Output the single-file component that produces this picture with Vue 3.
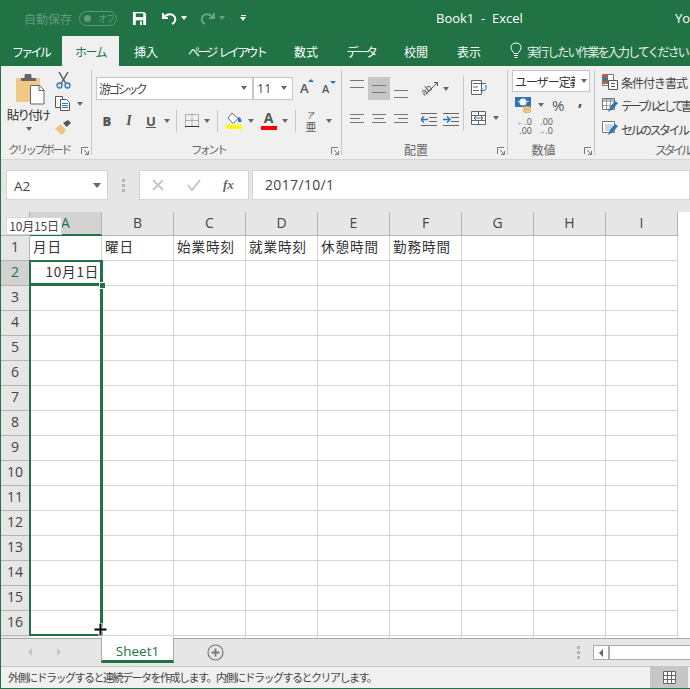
<script setup>
const cols = ['A', 'B', 'C', 'D', 'E', 'F', 'G', 'H', 'I']
const heads = ['月日', '曜日', '始業時刻', '就業時刻', '休憩時間', '勤務時間', '', '', '']
const rows = Array.from({ length: 14 }, (_, i) => i + 3)
</script>

<template>
  <div class="app">
    <header class="titlebar">
      <span class="autosave">自動保存</span>
      <span class="toggle"><i class="dot"></i><em>オフ</em></span>
      <svg class="save" width="16" height="16" viewBox="0 0 16 16"><path d="M1 1h12l2 2v12H1z" fill="#fff"/><path d="M4 2.500h8v4H4z" fill="#217346"/><path d="M4 10h8v5H4z" fill="#217346"/><path d="M8.500 11h2v4h-2z" fill="#fff"/></svg>
      <svg class="undo" width="17" height="14" viewBox="0 0 17 14"><path d="M2 2v5h5M2.500 6.500C5 3.500 8 3 10.500 3.500 13.500 4.500 15 7 14 10 13.500 11.500 12 12.500 11 13" fill="none" stroke="#fff" stroke-width="2"/></svg>
      <i class="caret white c1"></i>
      <svg class="redo" width="17" height="14" viewBox="0 0 17 14"><path d="M15 2v5h-5M14.500 6.500C12 3.500 9 3 6.500 3.500 3.500 4.500 2 7 3 10 3.500 11.500 5 12.500 6 13" fill="none" stroke="#6aa388" stroke-width="2"/></svg>
      <i class="caret dim c2"></i>
      <span class="qat"><i></i><i class="caret white"></i></span>
      <span class="doc">Book1&nbsp; -&nbsp; Excel</span>
      <span class="user">Yo</span>
    </header>

    <nav class="tabs">
      <span class="tab t-file">ファイル</span>
      <span class="tab t-home">ホーム</span>
      <span class="tab t-ins">挿入</span>
      <span class="tab t-page">ページ レイアウト</span>
      <span class="tab t-form">数式</span>
      <span class="tab t-data">データ</span>
      <span class="tab t-rev">校閲</span>
      <span class="tab t-view">表示</span>
      <svg class="bulb" width="12" height="17" viewBox="0 0 12 17"><path d="M4 11.500C3.500 9.500 1 8.500 1 5.500 1 2.700 3.200 1 6 1s5 1.700 5 4.500c0 3-2.500 4-3 6zM4 13.500h4M4.500 15.500h3" fill="none" stroke="#fff" stroke-width="1"/></svg>
      <span class="tell">実行したい作業を入力してください</span>
    </nav>

    <section class="ribbon">
      <div class="group g-clip">
        <div class="gbody clip-body">
          <div class="paste">
            <svg width="30" height="31" viewBox="0 0 30 31"><rect x="0" y="4" width="24" height="24" rx="1" fill="#f0c987"/><path d="M5 4h3.500V2a2.500 2 0 0 1 7 0v2H20v3H5z" fill="#666"/><path d="M14.500 11.500h9l4.500 4.500v14H14.500z" fill="#fff" stroke="#666"/><path d="M23 11.500V16.500h5" fill="none" stroke="#666"/></svg>
            <span class="paste-label">貼り付け</span>
            <i class="caret"></i>
          </div>
          <div class="clip-tools">
            <svg width="15" height="17" viewBox="0 0 15 17"><path d="M3 0l6.500 11M12 0L5.500 11" stroke="#555" stroke-width="1.400" fill="none"/><circle cx="3.500" cy="13.500" r="2.500" fill="none" stroke="#2f75b5" stroke-width="1.300"/><circle cx="11.500" cy="13.500" r="2.500" fill="none" stroke="#2f75b5" stroke-width="1.300"/></svg>
            <span class="copy-row">
              <svg width="17" height="15" viewBox="0 0 17 15"><path d="M.5.500h7v11h-7z" fill="#fff" stroke="#555"/><path d="M5.500 3.500h6l3 3v8h-9z" fill="#fff" stroke="#555"/><path d="M7 7.500h6M7 9.500h6M7 11.500h6" stroke="#2f75b5"/></svg>
              <i class="caret"></i>
            </span>
            <svg class="brush" width="17" height="15" viewBox="0 0 17 15"><path d="M0 9l6-5 5 6-4 5z" fill="#eec27f"/><path d="M6 4l2-1.500 3 4 .5 3.500z" fill="#fff"/><path d="M8 3l5-3 3 3-4.500 4z" fill="#555"/></svg>
          </div>
        </div>
        <div class="glabel lab-clip">クリップボード</div>
        <svg class="launch" width="8" height="8" viewBox="0 0 8 8"><path d="M.5 7V.5H7M3 3l4 4M4 7.500h3.500V4" fill="none" stroke="#777"/></svg>
      </div>

      <div class="group g-font">
        <div class="gbody stack">
          <div class="row font-row">
            <span class="combo fname">游ゴシック<i class="caret"></i></span>
            <span class="combo fsize">11<i class="caret"></i></span>
            <span class="grow"><b>A</b><i class="up"></i></span>
            <span class="shrink"><b>A</b><i class="down"></i></span>
          </div>
          <div class="row fmt-row">
            <span class="fb bold">B</span>
            <span class="fb ital">I</span>
            <span class="fb under">U</span>
            <i class="caret"></i>
            <i class="sep s1"></i>
            <svg class="bd" width="14" height="13" viewBox="0 0 14 13"><path d="M.5.500h13v12H.5zM7 .5v12M.5 6.500h13" fill="none" stroke="#777" stroke-dasharray="1 1"/><path d="M0 12.500h14" stroke="#333"/></svg>
            <i class="caret"></i>
            <i class="sep s2"></i>
            <svg class="fill" width="17" height="16" viewBox="0 0 17 16"><path d="M6 0l6 5.500-5 5-5-5.500z" fill="#fff" stroke="#666"/><path d="M12 4c2.500 .5 3.500 2 3.500 5h-3.500z" fill="#2f75b5"/><path d="M0 12h16v4H0z" fill="#ff0"/></svg>
            <i class="caret"></i>
            <span class="fcolor">A<i></i></span>
            <i class="caret"></i>
            <i class="sep s3"></i>
            <span class="phon"><small>ア</small><span>亜</span></span>
            <i class="caret"></i>
          </div>
        </div>
        <div class="glabel lab-font">フォント</div>
        <svg class="launch" width="8" height="8" viewBox="0 0 8 8"><path d="M.5 7V.5H7M3 3l4 4M4 7.500h3.500V4" fill="none" stroke="#777"/></svg>
      </div>

      <div class="group g-align">
        <div class="gbody align-body">
          <div class="stack align-main">
            <div class="row a-row">
              <span class="ab"><i class="ln top"></i></span>
              <span class="ab on"><i class="ln"></i></span>
              <span class="ab"><i class="ln bot"></i></span>
              <svg class="orient" width="18" height="17" viewBox="0 0 18 17"><text x="0" y="13" font-size="10" fill="#555" font-family="Liberation Sans" transform="rotate(-40 6 10)">ab</text><path d="M5 14L16 3M13 2.500h3.500V6" stroke="#555" fill="none"/></svg>
              <i class="caret"></i>
            </div>
            <div class="row a-row second">
              <span class="ab"><i class="tl"></i></span>
              <span class="ab"><i class="tl center"></i></span>
              <span class="ab"><i class="tl right"></i></span>
              <svg class="ind" width="16" height="13" viewBox="0 0 16 13"><path d="M0 .5h16M8 4.500h8M8 8.500h8M0 12.500h16" stroke="#666"/><path d="M0 6.500h7M3 3.500l-3 3 3 3" stroke="#2f75b5" stroke-width="1.500" fill="none"/></svg>
              <svg class="ind i2" width="16" height="13" viewBox="0 0 16 13"><path d="M0 .5h16M8 4.500h8M8 8.500h8M0 12.500h16" stroke="#666"/><path d="M0 6.500h7M4 3.500l3 3-3 3" stroke="#2f75b5" stroke-width="1.500" fill="none"/></svg>
            </div>
          </div>
          <i class="sep tall"></i>
          <div class="stack wrapcol">
            <svg width="17" height="15" viewBox="0 0 17 15"><path d="M.5.500h10v14H.5z" fill="#fff" stroke="#666"/><path d="M2 3.500h13M2 7h5M2 10.500h6" stroke="#666"/><path d="M15 5v3.500a2 2 0 0 1-2 2h-3M11.500 8.500l-2 2 2 2" stroke="#2f75b5" fill="none"/></svg>
            <span class="merge-row">
              <svg width="15" height="14" viewBox="0 0 15 14"><path d="M.5.500h14v13H.5zM.5 4.500h14M.5 9.500h14M7.500.5v4M7.500 9.500v4" fill="#fff" stroke="#666"/><path d="M3 7h9M5 5l-2 2 2 2M10 5l2 2-2 2" fill="none" stroke="#2f75b5"/></svg>
              <i class="caret"></i>
            </span>
          </div>
        </div>
        <div class="glabel lab-align">配置</div>
        <svg class="launch" width="8" height="8" viewBox="0 0 8 8"><path d="M.5 7V.5H7M3 3l4 4M4 7.500h3.500V4" fill="none" stroke="#777"/></svg>
      </div>

      <div class="group g-num">
        <div class="gbody num-body">
          <div class="numfmt"><span>ユーザー定義</span><i class="caret"></i></div>
          <div class="row n2">
            <svg width="17" height="16" viewBox="0 0 17 16"><path d="M0 0h16v10H0z" fill="#2f75b5"/><ellipse cx="8" cy="5" rx="3.500" ry="3.500" fill="#fff"/><path d="M3 4.500h1.500M12 4.500h1.500" stroke="#fff"/><ellipse cx="12" cy="11" rx="4" ry="1.800" fill="#f0c987" stroke="#c9963f" stroke-width=".5"/><ellipse cx="12" cy="14" rx="4" ry="1.800" fill="#f0c987" stroke="#c9963f" stroke-width=".5"/></svg>
            <i class="caret"></i>
            <span class="pct">%</span>
            <span class="comma">,</span>
          </div>
          <div class="row n3">
            <span class="dec"><span><b class="arr">←</b>.0</span><span>.00</span></span>
            <span class="dec d2"><span>.00</span><span><b class="arr">→</b>.0</span></span>
          </div>
        </div>
        <div class="glabel lab-num">数値</div>
        <svg class="launch" width="8" height="8" viewBox="0 0 8 8"><path d="M.5 7V.5H7M3 3l4 4M4 7.500h3.500V4" fill="none" stroke="#777"/></svg>
      </div>

      <div class="group g-style">
        <div class="gbody style-body">
          <div class="style-row">
            <svg width="16" height="16" viewBox="0 0 16 16"><path d="M.5.500h11v11H.5z" fill="#fff" stroke="#777"/><path d="M1 1h5v3H1z" fill="#c55a3a"/><path d="M1 4h5v3H1z" fill="#2f75b5"/><path d="M1 7h5v3H1z" fill="#c55a3a"/><path d="M6.500 6.500h9v9h-9z" fill="#fff" stroke="#555"/><path d="M9 9.500h4M9 12.500h4" stroke="#555"/></svg>
            <span class="st1">条件付き書式</span>
          </div>
          <div class="style-row">
            <svg width="16" height="16" viewBox="0 0 16 16"><path d="M.5.500h12v11H.5z" fill="#fff" stroke="#777"/><path d="M1 1h11v3H1z" fill="#bbb"/><path d="M4.500 1v10M8.500 1v10M1 7.500h11" stroke="#999"/><path d="M6 14l2-5 5-6 3 2-5 6z" fill="#2f75b5"/></svg>
            <span class="st2">テーブルとして書</span>
          </div>
          <div class="style-row">
            <svg width="16" height="16" viewBox="0 0 16 16"><path d="M.5.500h12v11H.5z" fill="#fff" stroke="#777"/><path d="M3 3h8v7H3z" fill="#c7d7e8"/><path d="M6 14l2-5 5-6 3 2-5 6z" fill="#2f75b5"/></svg>
            <span class="st3">セルのスタイル</span>
          </div>
        </div>
        <div class="glabel style-label">スタイル</div>
      </div>
    </section>

    <section class="formula">
      <div class="namebox"><span>A2</span><i class="caret big"></i></div>
      <span class="grip"><i></i><i></i><i></i></span>
      <div class="fbtns">
        <svg width="14" height="14" viewBox="0 0 14 14"><path d="M2 2l10 10M12 2L2 12" stroke="#c6c6c6" stroke-width="1.800"/></svg>
        <svg width="14" height="14" viewBox="0 0 14 14"><path d="M1 7l4 5 8-10" fill="none" stroke="#c6c6c6" stroke-width="2"/></svg>
        <span class="fx">fx</span>
      </div>
      <div class="finput">2017/10/1</div>
    </section>

    <section class="sheet">
      <div class="grid">
        <div class="corner"></div>
        <div v-for="c in cols" :key="c" class="ch" :class="{ sel: c === 'A' }">{{ c }}</div>

        <div class="rh">1</div>
        <div v-for="(h, i) in heads" :key="'h' + i" class="cell">{{ h }}</div>

        <div class="rh sel">2</div>
        <div class="cell val">10月1日</div>
        <div v-for="c in 8" :key="'e' + c" class="cell"></div>

        <template v-for="r in rows" :key="r">
          <div class="rh">{{ r }}</div>
          <div v-for="c in cols" :key="c" class="cell"></div>
        </template>

        <div class="tail"></div>
        <div v-for="c in cols" :key="'t' + c" class="tail cellt"></div>
      </div>
      <div class="range"></div>
      <div class="active"></div>
      <div class="handle"></div>
      <div class="tip">10月15日</div>
      <svg class="cross" width="15" height="15" viewBox="0 0 15 15"><path d="M7.500 1v13M1 7.500h13" stroke="#fff" stroke-width="4"/><path d="M7.500 1.500v12M1.500 7.500h12" stroke="#000" stroke-width="2"/></svg>
    </section>

    <section class="sheetbar">
      <i class="nav nav-l"></i>
      <i class="nav nav-r"></i>
      <div class="sheettab">Sheet1</div>
      <svg class="add" width="17" height="17" viewBox="0 0 17 17"><circle cx="8.500" cy="8.500" r="7.500" fill="none" stroke="#777" stroke-width="1.200"/><path d="M8.500 4.500v8M4.500 8.500h8" stroke="#777" stroke-width="1.800"/></svg>
      <span class="grip g2"><i></i><i></i><i></i></span>
      <div class="hscroll"><span class="hbtn"><i></i></span></div>
    </section>

    <footer class="status">
      <span class="msg">外側にドラッグすると連続データを作成します。内側にドラッグするとクリアします。</span>
      <span class="viewbtn">
        <svg width="13" height="13" viewBox="0 0 13 13"><path d="M.5.500h12v12H.5zM4.500.5v12M8.500.5v12M.5 4.500h12M.5 8.500h12" fill="#fff" stroke="#666"/></svg>
      </span>
    </footer>
  </div>
</template>

<style scoped>
.app {
  position: relative;
  width: 690px;
  height: 689px;
  box-sizing: border-box;
  overflow: hidden;
  display: flex;
  flex-direction: column;
  border-left: 1px solid #217346;
  border-bottom: 1px solid #217346;
  background: #e6e6e6;
  color: #444;
  font-family: "Noto Sans CJK JP", "Open Sans", sans-serif;
  font-size: 12px;
}
i { display: block; font-style: normal; flex: none; }
svg { display: block; flex: none; }

.caret { width: 0; height: 0; border-left: 3.500px solid transparent; border-right: 3.500px solid transparent; border-top: 4px solid #666; }
.caret.white { border-top-color: #fff; }
.caret.dim { border-top-color: #6aa388; }

/* title bar */
.titlebar { height: 36px; background: #217346; display: flex; align-items: center; color: #fff; flex: none; white-space: nowrap; }
.autosave { margin-left: 23px; color: #649a7d; font-size: 12px; width: 48px; flex: none; }
.toggle { margin-left: 7px; width: 38px; height: 15px; box-sizing: border-box; border: 1px solid #5f9a7c; border-radius: 8px; display: flex; align-items: center; padding-left: 4px; margin-top: 1px; flex: none; }
.dot { width: 7px; height: 7px; border-radius: 50%; background: #649a7d; }
.toggle em { font-style: normal; font-size: 9px; color: #649a7d; margin-left: 7px; letter-spacing: -1px; }
.save { margin-left: 15px; width: 15px; height: 15px; }
.undo { margin-left: 14px; }
.c1 { margin-left: 3px; }
.redo { margin-left: 12px; }
.c2 { margin-left: 3px; }
.qat { margin-left: 15px; display: flex; flex-direction: column; align-items: center; gap: 1px; flex: none; }
.qat i:first-child { width: 5px; height: 1px; background: #fff; }
.qat .caret { border-left-width: 3px; border-right-width: 3px; }
.doc { margin-left: 190px; font-family: "Open Sans", sans-serif; font-size: 13px; width: 239px; flex: none; }
.user { font-family: "Open Sans", sans-serif; font-size: 13px; }

/* tabs */
.tabs { height: 30px; background: #217346; display: flex; align-items: stretch; flex: none; color: #fff; white-space: nowrap; font-size: 12px; overflow: hidden; }
.tab { display: flex; align-items: center; justify-content: center; padding-top: 1px; box-sizing: border-box; flex: none; }
.t-file { margin-left: 12px; width: 35px; letter-spacing: -2.700px; }
.t-home { margin-left: 14px; width: 57px; background: #f0f0f0; color: #217346; letter-spacing: -1.500px; }
.t-ins { margin-left: 15px; width: 24px; }
.t-page { margin-left: 29px; width: 79px; letter-spacing: -2.700px; word-spacing: 3px; }
.t-form { margin-left: 28px; width: 24px; }
.t-data { margin-left: 29px; width: 28px; letter-spacing: -2.300px; }
.t-rev { margin-left: 29px; width: 24px; }
.t-view { margin-left: 29px; width: 24px; }
.bulb { margin: 6px 0 0 29px; }
.tell { margin-left: 5px; display: flex; align-items: center; letter-spacing: -1.900px; color: #e9f1ec; padding-top: 1px; flex: none; }

/* ribbon */
.ribbon { height: 94px; box-sizing: border-box; background: #f0f0f0; border-bottom: 1px solid #d4d4d4; display: flex; flex: none; overflow: hidden; }
.group { position: relative; display: flex; flex-direction: column; box-sizing: border-box; flex: none; }
.group::after { content: ""; position: absolute; right: 0; top: 4px; bottom: 4px; width: 1px; background: #c6c6c6; }
.gbody { height: 76px; box-sizing: border-box; flex: none; }
.glabel { text-align: center; color: #666; font-size: 12px; line-height: 15px; white-space: nowrap; }
.lab-clip { text-align: left; padding-left: 7px; font-size: 11.500px; letter-spacing: -2.700px; }
.lab-font { padding-right: 22px; font-size: 11.500px; letter-spacing: -3px; }
.lab-align { padding-right: 18px; }
.lab-num { padding-right: 16px; }
.launch { position: absolute; right: 3px; bottom: 4px; }
.stack { display: flex; flex-direction: column; }
.row { display: flex; align-items: center; }

.g-clip { width: 91px; }
.clip-body { display: flex; padding-top: 8px; }
.paste { width: 48px; margin-left: 5px; display: flex; flex-direction: column; align-items: center; }
.paste svg { margin-left: 1px; }
.paste-label { font-size: 12.500px; letter-spacing: -1.900px; color: #333; line-height: 16px; margin: 2px 4px 0 0; white-space: nowrap; }
.paste .caret { margin-top: 4px; margin-right: 3px; }
.clip-tools { margin-left: 1px; display: flex; flex-direction: column; }
.clip-tools > svg:first-child { margin-left: 1px; margin-top: -2px; }
.copy-row { display: flex; align-items: center; gap: 4px; margin-top: 7px; }
.copy-row .caret { margin-left: 1px; }
.brush { margin-top: 9px; }

.g-font { width: 250px; padding-left: 4px; }
.font-row { padding-top: 11px; height: 33px; box-sizing: border-box; }
.combo { height: 23px; box-sizing: border-box; background: #fff; border: 1px solid #c6c6c6; display: flex; align-items: center; justify-content: space-between; padding: 0 5px 0 2px; color: #444; flex: none; white-space: nowrap; }
.fname { width: 157px; letter-spacing: -2.800px; }
.fsize { width: 40px; margin-left: 0; font-family: "Open Sans", sans-serif; font-size: 12.500px; padding-left: 3px; letter-spacing: 0; }
.grow, .shrink { position: relative; margin-left: 7px; width: 14px; font-family: "Open Sans", sans-serif; font-size: 13px; color: #555; flex: none; }
.shrink { margin-left: 8px; font-size: 11px; }
.grow b, .shrink b { font-weight: 600; }
.up, .down { position: absolute; left: 8px; top: 0; width: 0; height: 0; border-left: 3px solid transparent; border-right: 3px solid transparent; }
.up { border-bottom: 3px solid #2f75b5; }
.down { border-top: 3px solid #2f75b5; }
.fmt-row { height: 38px; padding-top: 5px; box-sizing: border-box; }
.fb { width: 22px; text-align: center; font-family: "Liberation Serif", serif; font-size: 14px; font-weight: 700; color: #555; flex: none; }
.bold { font-family: "Open Sans", sans-serif; font-weight: 800; font-size: 13px; }
.ital { font-style: italic; }
.under { text-decoration: underline; font-family: "Open Sans", sans-serif; font-size: 13px; }
.sep { width: 1px; background: #c6c6c6; height: 22px; }
.s1 { margin-left: 6px; }
.bd { margin-left: 8px; }
.fmt-row .caret { margin-left: 5px; }
.fmt-row .fb + .caret { margin-left: 2px; }
.s2, .s3 { margin-left: 7px; }
.fill { margin-left: 8px; }
.fcolor { margin-left: 6px; width: 17px; display: flex; flex-direction: column; align-items: center; font-family: "Open Sans", sans-serif; font-weight: 700; font-size: 14px; line-height: 14px; color: #555; flex: none; }
.fcolor i { width: 16px; height: 4px; background: #f00; margin-top: 1px; }
.phon { margin-left: 9px; width: 12px; display: flex; flex-direction: column; align-items: center; font-size: 11px; line-height: 12px; color: #555; flex: none; }
.phon small { font-size: 8px; line-height: 10px; }
.s3 + .phon + .caret { margin-left: 9px; }

.g-align { width: 166px; }
.align-body { display: flex; padding-left: 4px; }
.align-main { width: 117px; padding-top: 11px; flex: none; }
.a-row { height: 23px; }
.a-row.second { margin-top: 8px; }
.ab { width: 22px; height: 23px; position: relative; display: block; flex: none; }
.ab.on { background: #c6c6c6; }
.ln { position: absolute; left: 4px; width: 14px; height: 6px; top: 8px; border-top: 1px solid #777; border-bottom: 1px solid #777; }
.ln.top { top: 3px; }
.ln.bot { top: 13px; }
.tl { position: absolute; top: 6px; left: 4px; width: 14px; height: 9px; background: linear-gradient(#777, #777) 0 0 / 14px 1px no-repeat, linear-gradient(#777, #777) 0 4px / 10px 1px no-repeat, linear-gradient(#777, #777) 0 8px / 14px 1px no-repeat; }
.tl.center { background-position: 0 0, 2px 4px, 0 8px; }
.tl.right { background-position: 0 0, 4px 4px, 0 8px; }
.orient { margin-left: 9px; }
.a-row .caret { margin-left: 4px; }
.ind { margin-left: 9px; }
.i2 { margin-left: 6px; }
.sep.tall { height: 55px; margin-top: 10px; }
.wrapcol { margin-left: 7px; padding-top: 14px; gap: 16px; }
.merge-row { display: flex; align-items: center; gap: 7px; }

.g-num { width: 87px; }
.num-body { padding: 4px 0 0 4px; }
.numfmt { width: 78px; height: 22px; box-sizing: border-box; background: #fff; border: 1px solid #c6c6c6; display: flex; align-items: center; padding-left: 2px; overflow: hidden; white-space: nowrap; position: relative; letter-spacing: -1px; color: #333; }
.numfmt span { width: 60px; overflow: hidden; flex: none; }
.numfmt .caret { margin-left: 6px; }
.n2 { padding: 1px 0 0 3px; height: 23px; }
.n2 .caret { margin-left: 6px; }
.pct { margin-left: 8px; font-family: "Open Sans", sans-serif; font-size: 15px; color: #555; width: 16px; flex: none; line-height: 20px; }
.comma { margin-left: 10px; font-family: "Open Sans", sans-serif; font-weight: 800; font-size: 14px; color: #555; line-height: 12px; margin-top: -8px; }
.n3 { padding: 1px 0 0 2px; }
.dec { display: flex; flex-direction: column; align-items: flex-end; width: 18px; font-family: "Open Sans", sans-serif; font-size: 9px; line-height: 9px; color: #555; flex: none; }
.d2 { margin-left: 5px; width: 16px; }
.arr { color: #2f75b5; font-weight: 700; font-size: 8px; }

.g-style { width: 95px; }
.g-style::after { display: none; }
.style-body { padding: 5px 0 0 7px; display: flex; flex-direction: column; gap: 1px; }
.style-row { height: 22.500px; display: flex; align-items: center; gap: 3px; white-space: nowrap; color: #444; }
.st1 { letter-spacing: -1px; }
.st2 { letter-spacing: -3.300px; }
.st3 { letter-spacing: -2.500px; }
.style-label { text-align: left; padding-left: 60px; letter-spacing: -3.300px; }

/* formula bar */
.formula { height: 52px; flex: none; display: flex; box-sizing: border-box; padding: 10px 0 12px 5px; background: #e6e6e6; }
.namebox, .fbtns, .finput { height: 30px; box-sizing: border-box; background: #fff; border: 1px solid #d4d4d4; }
.namebox { width: 102px; display: flex; align-items: center; justify-content: space-between; padding: 2px 6px 0 7px; font-family: "Open Sans", sans-serif; font-size: 13.500px; flex: none; }
.caret.big { border-left-width: 4px; border-right-width: 4px; border-top-width: 5px; margin-bottom: 2px; }
.grip { width: 3px; display: flex; flex-direction: column; justify-content: center; gap: 2px; margin-left: 14px; flex: none; }
.grip i { width: 3px; height: 3px; background: #b4b4b4; }
.fbtns { width: 110px; margin-left: 14px; display: flex; align-items: center; padding-left: 11px; gap: 22px; flex: none; }
.fx { font-family: "Liberation Serif", serif; font-style: italic; font-weight: 700; color: #666; font-size: 13px; margin-left: 0; }
.finput { margin-left: 3px; flex: 1; padding-left: 12px; line-height: 28px; font-family: "Open Sans", sans-serif; font-size: 14px; letter-spacing: .35px; }

/* sheet */
.sheet { position: relative; height: 426px; flex: none; overflow: hidden; background: #fff; }
.grid { display: grid; grid-template-columns: 29px repeat(9, 72px); grid-template-rows: 24px repeat(16, 25px) 2px; }
.corner { background: #e6e6e6; border-right: 1px solid #b4b4b4; border-bottom: 1px solid #b4b4b4; }
.ch { background: #e6e6e6; border-right: 1px solid #b4b4b4; border-bottom: 1px solid #b4b4b4; box-sizing: border-box; display: flex; align-items: center; justify-content: center; font-family: "Open Sans", sans-serif; font-size: 14px; color: #444; padding-bottom: 2px; }
.ch.sel { background: #d2d2d2; color: #217346; border-bottom: 2px solid #217346; }
.rh { background: #e6e6e6; border-right: 1px solid #b4b4b4; border-bottom: 1px solid #b4b4b4; box-sizing: border-box; display: flex; align-items: center; justify-content: center; font-family: "Open Sans", sans-serif; font-size: 14px; color: #444; padding-bottom: 3px; }
.rh.sel { background: #d2d2d2; color: #217346; }
.cell { border-right: 1px solid #d4d4d4; border-bottom: 1px solid #d4d4d4; box-sizing: border-box; font-size: 13.500px; letter-spacing: 1px; line-height: 21px; padding-left: 3px; white-space: nowrap; overflow: hidden; color: #333; }
.cell.val { text-align: right; padding-right: 2px; letter-spacing: .8px; }
.tail { background: #e6e6e6; }
.cellt { background: #fff; border-right: 1px solid #d4d4d4; box-sizing: border-box; }

.range { position: absolute; left: 28px; top: 48px; width: 74px; height: 376px; box-sizing: border-box; border: 2px solid #217346; border-right-width: 3px; }
.active { position: absolute; left: 28px; top: 48px; width: 74px; height: 26px; box-sizing: border-box; border: 2px solid #217346; border-bottom-width: 3px; }
.handle { position: absolute; left: 99px; top: 71px; width: 5px; height: 5px; background: #217346; border: 1px solid #fff; box-sizing: content-box; margin: -1px; }
.tip { position: absolute; left: 5px; top: 5px; width: 56px; height: 18px; box-sizing: border-box; background: #fff; border: 1px solid #d8d8d8; font-size: 12px; line-height: 16px; text-align: center; letter-spacing: -.2px; color: #444; white-space: nowrap; }
.cross { position: absolute; left: 92px; top: 410px; }

/* sheet tabs */
.sheetbar { height: 28px; flex: none; box-sizing: border-box; border-top: 1px solid #aaa; display: flex; align-items: flex-start; background: #e6e6e6; position: relative; }
.nav { width: 0; height: 0; border-top: 4px solid transparent; border-bottom: 4px solid transparent; margin-top: 9px; }
.nav-l { margin-left: 27px; border-right: 4px solid #c6c6c6; }
.nav-r { margin-left: 25px; border-left: 4px solid #c6c6c6; }
.sheettab { margin-left: 40px; margin-top: -1px; width: 73px; height: 25px; box-sizing: border-box; background: #fff; border-left: 1px solid #aaa; border-right: 1px solid #aaa; border-bottom: 3px solid #217346; color: #217346; font-family: "Open Sans", sans-serif; font-size: 13.500px; text-align: center; line-height: 26px; flex: none; }
.add { margin-left: 33px; margin-top: 5px; }
.g2 { margin-left: 353px; margin-top: 6px; height: 15px; }
.hscroll { margin-left: 13px; margin-top: 6px; flex: 1; height: 15px; box-sizing: border-box; border: 1px solid #aaa; border-right: 0; background: #fff; display: flex; }
.hbtn { width: 14px; border-right: 2px solid #aaa; display: flex; align-items: center; justify-content: center; }
.hbtn i { width: 0; height: 0; border-top: 4px solid transparent; border-bottom: 4px solid transparent; border-right: 4px solid #666; }

/* status */
.status { flex: 1; min-height: 0; background: #f0f0f0; border-top: 1px solid #c6c6c6; display: flex; align-items: stretch; justify-content: space-between; overflow: hidden; }
.msg { padding-left: 7px; font-size: 11px; line-height: 21px; letter-spacing: -1.500px; color: #444; white-space: nowrap; }
.viewbtn { width: 38px; background: #c6c6c6; display: flex; align-items: center; justify-content: center; margin-right: 2px; }
</style>
